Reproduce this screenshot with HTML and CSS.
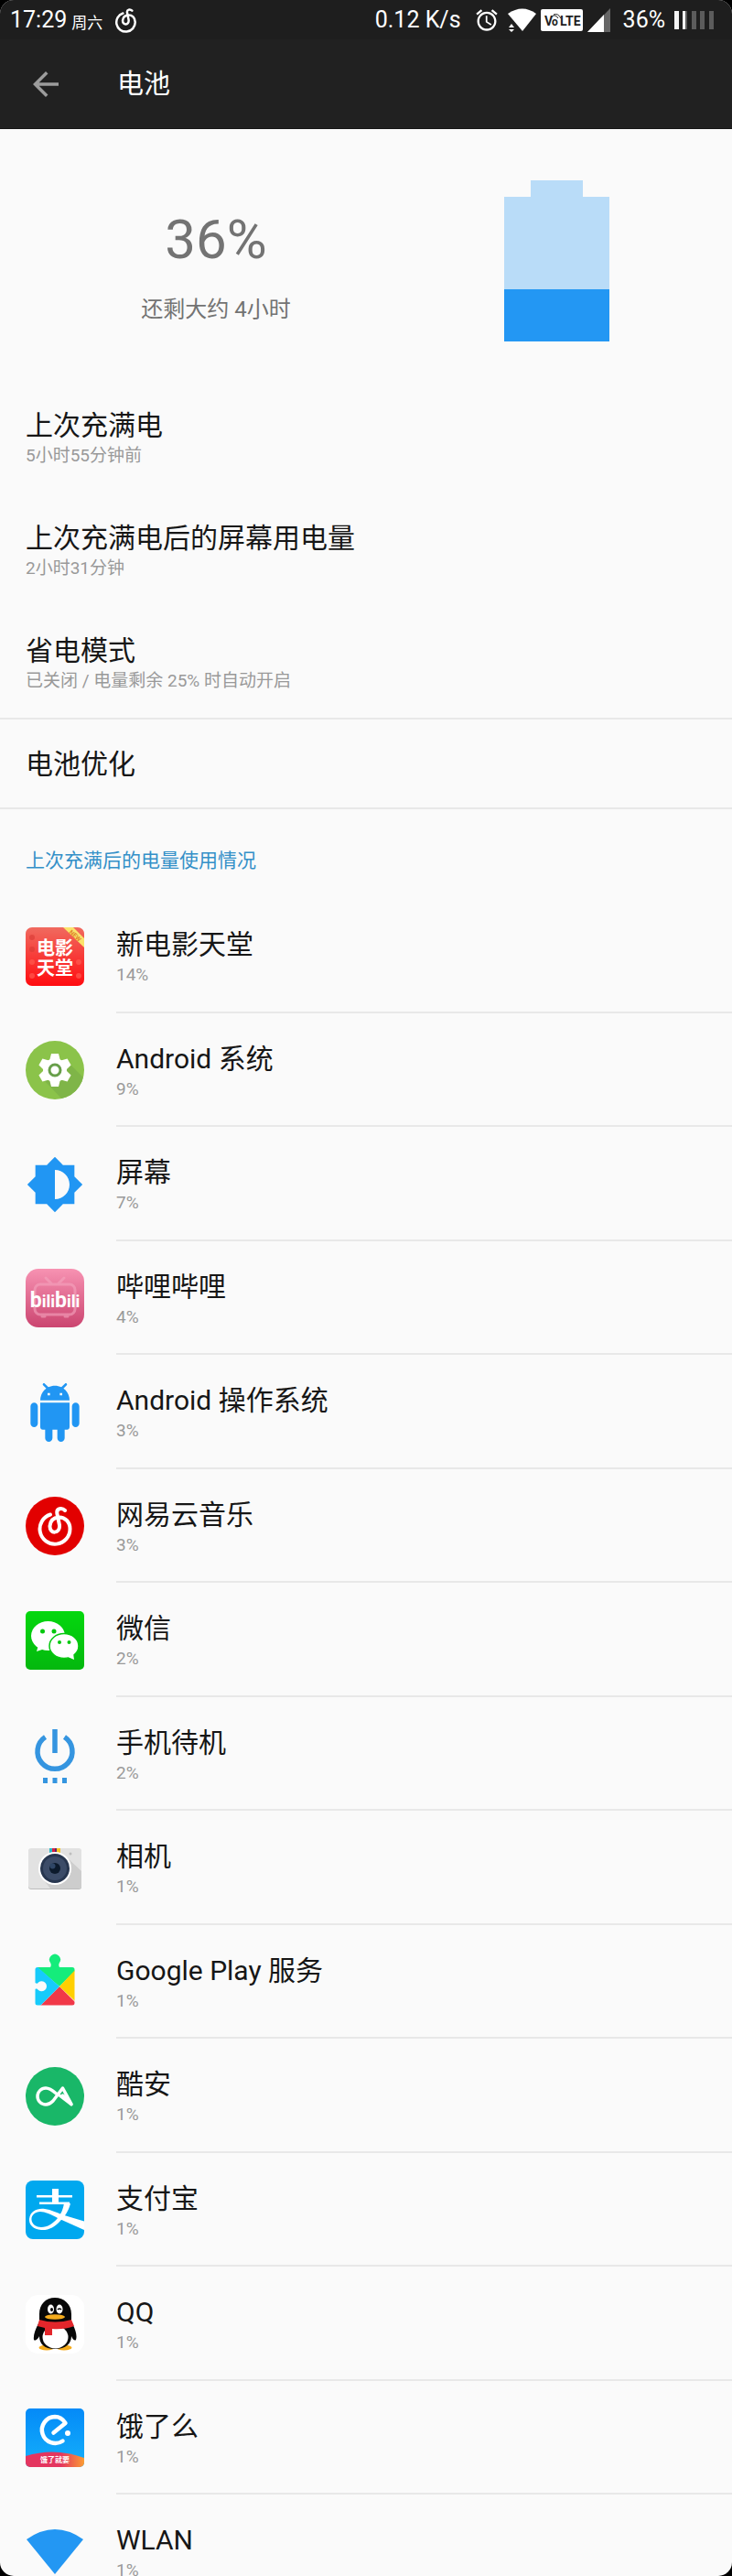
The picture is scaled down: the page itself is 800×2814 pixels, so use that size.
FILE: index.html
```html
<!DOCTYPE html>
<html lang="zh-CN">
<head>
  <meta charset="UTF-8" />
  <meta name="viewport" content="width=device-width, initial-scale=1.0"/>
  <title>电池</title>
  <link rel="stylesheet" href="styles.css">
</head>
<body>

  <!-- shared symbol, used in the status bar and in the app list -->
  <svg class="defs" width="0" height="0" aria-hidden="true">
    <symbol id="netease" viewBox="12 9 40 45">
      <path d="M43 15C40 12 33 12 34.500 19L37 31C38 41 26 41 26.500 32C27 26 31 23 36 22.500C43 22 48.500 27.500 48.500 35A16.500 16.500 0 1 1 27 19.500" fill="none" stroke="#fff" stroke-width="4" stroke-linecap="round" stroke-linejoin="round"/>
    </symbol>
  </svg>

  <div class="screen">
    <div class="statusbar">
      <div class="status-left">
        <span class="time">17:29</span>
        <span class="day">周六</span>
        <svg class="status-music" width="25" height="28"><use href="#netease"/></svg>
      </div>
      <div class="status-right">
        <span class="speed">0.12 K/s</span>
        <svg class="alarm" width="28" height="28" viewBox="0 0 24 24" fill="#fff"><path d="M22 5.720l-4.600-3.860-1.290 1.530 4.600 3.860L22 5.720zM7.880 3.390L6.600 1.860 2 5.710l1.290 1.530 4.590-3.850zM12.500 8H11v6l4.750 2.850.75-1.230-4-2.370V8zM12 4c-4.970 0-9 4.030-9 9s4.020 9 9 9c4.970 0 9-4.030 9-9s-4.030-9-9-9zm0 16c-3.870 0-7-3.130-7-7s3.130-7 7-7 7 3.130 7 7-3.130 7-7 7z"/></svg>
        <svg width="31" height="26" viewBox="0 0 31 26" fill="#fff"><path d="M16 25L0 6Q16-5 31 6Z"/><path d="M1 21h6L4 17zM1 23h6l-3 3z" stroke="#1f1f1f" stroke-width="1" paint-order="stroke"/></svg>
        <svg width="46" height="24" viewBox="0 0 46 24"><rect width="46" height="24" rx="2" fill="#fff"/><text x="4" y="18" class="volte">V</text><text x="12" y="18" class="volte volte-o">o</text><text x="21" y="18" class="volte">LTE</text><path d="M12 8q4-3 7 2M14 6q5-2 8 4" fill="none" stroke="#1f1f1f" stroke-width="1"/></svg>
        <svg class="signal" width="25" height="26" viewBox="0 0 25 26"><path d="M0 26L25 0V26Z" fill="#666"/><path d="M0 26L18 7V26Z" fill="#fff"/></svg>
        <span class="percent">36%</span>
        <svg width="43" height="20" viewBox="0 0 43 20"><path d="M0 0h5v20H0zM9 0h3v20H9z" fill="#f4f4f4"/><path d="M12 0h2v20h-2zM19 0h5v20h-5zM28 0h5v20h-5zM38 0h5v20h-5z" fill="#5c5c5c"/></svg>
      </div>
    </div>

    <header class="toolbar">
      <button class="back" aria-label="返回">
        <svg width="42" height="42" viewBox="0 0 24 24" fill="#9c9c9c"><path d="M20 11H7.830l5.590-5.590L12 4l-8 8 8 8 1.410-1.410L7.830 13H20v-2z"/></svg>
      </button>
      <h1>电池</h1>
    </header>

    <main class="content">
      <section class="hero">
        <div class="level">
          <div class="level-value">36%</div>
          <div class="level-left">还剩大约 4小时</div>
        </div>
        <div class="battery">
          <svg width="115" height="176" viewBox="0 0 115 176"><path d="M29 0h57v18h29v158H0V18h29z" fill="#b9dcf8"/><path d="M0 119h115v57H0z" fill="#2397f3"/></svg>
        </div>
      </section>

      <ul class="settings">
        <li class="setting"><div class="title">上次充满电</div><div class="sub">5小时55分钟前</div></li>
        <li class="setting"><div class="title">上次充满电后的屏幕用电量</div><div class="sub">2小时31分钟</div></li>
        <li class="setting"><a href="#saver"><div class="title">省电模式</div><div class="sub">已关闭 / 电量剩余 25% 时自动开启</div></a></li>
        <li class="setting single"><a href="#optimize"><div class="title">电池优化</div></a></li>
      </ul>

      <h2>上次充满后的电量使用情况</h2>

      <ul class="apps">
        <li><a class="app" href="#movie">
          <svg class="icon" viewBox="0 0 64 64">
            <defs>
              <linearGradient id="movieBg" x1="0" y1="0" x2="0" y2="1"><stop offset="0" stop-color="#f06a5f"/><stop offset="1" stop-color="#ff0c10"/></linearGradient>
              <clipPath id="movieClip"><rect width="64" height="64" rx="7"/></clipPath>
            </defs>
            <g clip-path="url(#movieClip)">
              <rect width="64" height="64" fill="url(#movieBg)"/>
              <g fill="#d93a35" opacity=".6"><circle cx="7" cy="11" r="3"/><circle cx="7" cy="24" r="3"/></g>
              <g fill="#ff5a50" opacity=".7"><circle cx="7" cy="38" r="3"/><circle cx="7" cy="53" r="3"/><circle cx="58" cy="38" r="3"/><circle cx="58" cy="53" r="3"/></g>
              <path d="M41 0H52L64 12V22Z" fill="#fbe36b"/>
              <text x="47" y="6" class="movie-new" transform="rotate(42 47 6)">NEW</text>
            </g>
            <text x="12" y="30" class="movie-text">电影</text>
            <text x="12" y="52" class="movie-text">天堂</text>
          </svg>
          <div class="info"><div class="title">新电影天堂</div><div class="sub">14%</div></div>
        </a></li>

        <li><a class="app" href="#android">
          <svg class="icon" viewBox="0 0 64 64">
            <clipPath id="gearClip"><circle cx="32" cy="32" r="32"/></clipPath>
            <circle cx="32" cy="32" r="32" fill="#8bc34a"/>
            <path d="M20 43L45 22L70 47L50 70H46Z" fill="#7fb548" clip-path="url(#gearClip)"/>
            <g fill="#fff">
              <circle cx="32" cy="32" r="13"/>
              <path id="tooth" d="M28 14h8l2 8v20l-2 8h-8l-2-8V22z"/>
              <use href="#tooth" transform="rotate(60 32 32)"/>
              <use href="#tooth" transform="rotate(120 32 32)"/>
            </g>
            <circle cx="32" cy="32" r="6" fill="#fff" stroke="#689f4b" stroke-width="3"/>
          </svg>
          <div class="info"><div class="title">Android 系统</div><div class="sub">9%</div></div>
        </a></li>

        <li><a class="app" href="#display">
          <svg class="icon" viewBox="0 0 24 24" fill="#2196f3"><path d="M20 15.310L23.310 12 20 8.690V4h-4.690L12 .69 8.690 4H4v4.690L.69 12 4 15.310V20h4.690L12 23.310 15.310 20H20v-4.690zM12 18V6c3.310 0 6 2.690 6 6s-2.690 6-6 6z"/></svg>
          <div class="info"><div class="title">屏幕</div><div class="sub">7%</div></div>
        </a></li>

        <li><a class="app" href="#bilibili">
          <svg class="icon" viewBox="0 0 64 64">
            <linearGradient id="biliBg" x1="0" y1="0" x2="0" y2="1"><stop offset="0" stop-color="#f792b2"/><stop offset="1" stop-color="#cb4570"/></linearGradient>
            <rect width="64" height="64" rx="14" fill="url(#biliBg)"/>
            <g fill="none" stroke="#f5a5bf" stroke-width="3" stroke-linecap="round" opacity=".6"><rect x="10" y="17" width="44" height="33" rx="6"/><path d="M22 10l6 6M42 10l-6 6M18 52h3M43 52h3"/></g>
            <text x="32" y="42" text-anchor="middle" class="bili-text"><tspan class="bili-b">b</tspan>ili<tspan class="bili-b">b</tspan>ili</text>
          </svg>
          <div class="info"><div class="title">哔哩哔哩</div><div class="sub">4%</div></div>
        </a></li>

        <li><a class="app" href="#os">
          <svg class="icon" viewBox="0 0 24 24" fill="#2196f3"><path d="M6 18c0 .55.45 1 1 1h1v3.500c0 .83.67 1.500 1.500 1.500s1.500-.67 1.500-1.500V19h2v3.500c0 .83.67 1.500 1.500 1.500s1.500-.67 1.500-1.500V19h1c.55 0 1-.45 1-1V8H6v10zM3.500 8C2.670 8 2 8.670 2 9.500v7c0 .83.67 1.500 1.500 1.500S5 17.330 5 16.500v-7C5 8.670 4.330 8 3.500 8zm17 0c-.83 0-1.500.67-1.500 1.500v7c0 .83.67 1.500 1.500 1.500s1.500-.67 1.500-1.500v-7c0-.83-.67-1.500-1.500-1.500zm-4.970-5.840l1.300-1.300c.2-.2.2-.51 0-.71-.2-.2-.51-.2-.71 0l-1.480 1.480C13.850 1.230 12.950 1 12 1c-.96 0-1.860.23-2.660.63L7.850.15c-.2-.2-.51-.2-.71 0-.2.2-.2.51 0 .71l1.310 1.310C6.970 3.260 6 5.010 6 7h12c0-1.990-.97-3.750-2.470-4.840zM10 5H9V4h1v1zm5 0h-1V4h1v1z"/></svg>
          <div class="info"><div class="title">Android 操作系统</div><div class="sub">3%</div></div>
        </a></li>

        <li><a class="app" href="#music">
          <svg class="icon" viewBox="0 0 64 64"><circle cx="32" cy="32" r="32" fill="#e20000"/><use href="#netease" x="12" y="9" width="40" height="45"/></svg>
          <div class="info"><div class="title">网易云音乐</div><div class="sub">3%</div></div>
        </a></li>

        <li><a class="app" href="#wechat">
          <svg class="icon" viewBox="0 0 64 64">
            <linearGradient id="wxBg" x1="0" y1="0" x2="0" y2="1"><stop offset="0" stop-color="#04d80e"/><stop offset="1" stop-color="#04b80e"/></linearGradient>
            <rect width="64" height="64" rx="5" fill="url(#wxBg)"/>
            <g fill="#fff"><ellipse cx="24.500" cy="27" rx="18.500" ry="16"/><path d="M14 37l-2 7 9-3z"/></g>
            <ellipse cx="42" cy="38" rx="16" ry="13.500" fill="#fff" stroke="#04c80e" stroke-width="1.500"/>
            <path d="M46 50l7 3-1-7z" fill="#fff"/>
            <g fill="#04c80e"><circle cx="18.500" cy="22" r="2.500"/><circle cx="31" cy="22" r="2.500"/><circle cx="37" cy="34" r="2"/><circle cx="47.500" cy="34" r="2"/></g>
          </svg>
          <div class="info"><div class="title">微信</div><div class="sub">2%</div></div>
        </a></li>

        <li><a class="app" href="#standby">
          <svg class="icon" viewBox="0 0 64 64"><path d="M21.500 13.500A19 19 0 1 0 42.500 13.500M32 5V31" fill="none" stroke="#3595e0" stroke-width="5.500"/><path d="M19 58h5v6h-5zM29.500 58h5v6h-5zM40 58h5v6h-5z" fill="#3595e0"/></svg>
          <div class="info"><div class="title">手机待机</div><div class="sub">2%</div></div>
        </a></li>

        <li><a class="app" href="#camera">
          <svg class="icon" viewBox="0 0 64 64">
            <rect x="3" y="11" width="58" height="44" rx="3" fill="#bdbdbd"/>
            <rect x="3" y="10" width="58" height="44" rx="3" fill="#e2e2e2"/>
            <path d="M45 20L61 35V54H27L20 45Z" fill="#cdcdcd"/>
            <path d="M26 10h3v5h-3z" fill="#26b8c6"/><path d="M29 10h3v5h-3z" fill="#d81f45"/><path d="M32 10h2v5h-2z" fill="#5f2a66"/><path d="M34 10h4v5h-4z" fill="#f6c423"/>
            <circle cx="49" cy="16" r="1.500" fill="#bdbdbd"/>
            <circle cx="32" cy="32" r="18" fill="#fff"/>
            <circle cx="32" cy="32" r="16" fill="#27364f"/>
            <circle cx="32" cy="32" r="13" fill="#3c4c68"/>
            <circle cx="32" cy="32" r="6" fill="#0c1a2c"/>
            <circle cx="29.500" cy="29.500" r="3" fill="#2f4666"/>
          </svg>
          <div class="info"><div class="title">相机</div><div class="sub">1%</div></div>
        </a></li>

        <li><a class="app" href="#play">
          <svg class="icon" viewBox="0 0 64 64">
            <clipPath id="puzzle"><path d="M13 16H27C28 14 28 13 27 11A6 6 0 1 1 37 11C36 13 36 14 37 16H51Q53.500 16 53.500 18.500V55Q53.500 57.500 51 57.500H13Q10.500 57.500 10.500 55V40C12 39 13 40 14 41A5.500 5.500 0 1 0 14 32.500C13 34 12 34 10.500 33V18.500Q10.500 16 13 16Z"/></clipPath>
            <g clip-path="url(#puzzle)">
              <path d="M10 14V0H54V20L37 37Z" fill="#15ec7b"/>
              <path d="M10 64L37 37L58 58V64Z" fill="#f13848"/>
              <path d="M55 18L37 37L55 54Z" fill="#ffcf00"/>
              <path d="M10 13L37 37L10 64Z" fill="#16cbfb"/>
            </g>
          </svg>
          <div class="info"><div class="title">Google Play 服务</div><div class="sub">1%</div></div>
        </a></li>

        <li><a class="app" href="#coolapk">
          <svg class="icon" viewBox="0 0 64 64"><circle cx="32" cy="32" r="32" fill="#19b768"/><path d="M40.500 31L50 40.500L40.500 23L30 37C27 40 24.500 41 22 41A9 9 0 0 1 22 23C27 23 30 26 34 29.500" fill="none" stroke="#fff" stroke-width="3.500" stroke-linecap="round" stroke-linejoin="round"/><path d="M37 31L50 41" stroke="#fff" stroke-width="3" stroke-linecap="round"/></svg>
          <div class="info"><div class="title">酷安</div><div class="sub">1%</div></div>
        </a></li>

        <li><a class="app" href="#alipay">
          <svg class="icon" viewBox="0 0 64 64">
            <clipPath id="aliClip"><rect width="64" height="64" rx="8"/></clipPath>
            <rect width="64" height="64" rx="8" fill="#00a8ef"/>
            <g clip-path="url(#aliClip)">
              <path d="M29 9h7v16h-7zM12 16h39v2.500H12zM15 23.500h33V26H15z" fill="#fff"/>
              <path d="M42 25h7C47 33 43 39 38 44C32 51 25 54.500 17 54C8 53 3.500 48 4 42C5 33 13 30 21 31C28 32 34 35 39 37L66 45V55L35 41C28 37 21 34 16 34C10 34.500 6 38 6.500 43C7 48 12 51 17 51C24 51 30 47 35 41C39 36 41 31 42 25Z" fill="#fff"/>
            </g>
          </svg>
          <div class="info"><div class="title">支付宝</div><div class="sub">1%</div></div>
        </a></li>

        <li><a class="app" href="#qq">
          <svg class="icon" viewBox="0 0 64 64">
            <rect width="64" height="64" rx="14" fill="#fff"/>
            <g fill="#f5ac1d"><ellipse cx="23" cy="57.500" rx="8.500" ry="3"/><ellipse cx="42" cy="57.500" rx="8.500" ry="3"/></g>
            <path d="M32 3C42 3 50 10 50 21V29C53 35 57 43 55 49C53 51 51 47 50 45C50 53 44 59 32 59S15 53 15 45C14 47 11 51 9 49C8 43 12 35 15 29V21C15 10 22 3 32 3Z" fill="#080808"/>
            <ellipse cx="32.500" cy="46" rx="14" ry="12.500" fill="#fff"/>
            <g fill="#fff"><ellipse cx="27.500" cy="15.500" rx="3.500" ry="5"/><ellipse cx="37" cy="15.500" rx="3.500" ry="5"/></g>
            <ellipse cx="28.500" cy="16" rx="1.500" ry="2" fill="#080808"/><path d="M35 16q2-2 4 0" fill="none" stroke="#080808" stroke-width="1.500"/>
            <ellipse cx="32" cy="24" rx="11" ry="2.800" fill="#f5ac1d"/>
            <path d="M15 27Q32 32 50 27L53 34Q42 38 29 37V44H21V36L13 34Z" fill="#e3262b"/>
          </svg>
          <div class="info"><div class="title">QQ</div><div class="sub">1%</div></div>
        </a></li>

        <li><a class="app" href="#eleme">
          <svg class="icon" viewBox="0 0 64 64">
            <linearGradient id="eleBg" x1="0" y1="0" x2="0" y2="1"><stop offset="0" stop-color="#048af8"/><stop offset="1" stop-color="#14b0fa"/></linearGradient>
            <linearGradient id="eleWave" x1="0" y1="0" x2="1" y2="0"><stop offset=".6" stop-color="#e4355f"/><stop offset="1" stop-color="#fb9c33"/></linearGradient>
            <clipPath id="eleClip"><rect width="64" height="64" rx="5"/></clipPath>
            <g clip-path="url(#eleClip)">
              <rect width="64" height="64" fill="url(#eleBg)"/>
              <path d="M0 52Q32 42 64 54V64H0Z" fill="url(#eleWave)"/>
            </g>
            <path d="M30.500 26.500L43.500 16C40 10.500 36 9 32 9A14.500 14.500 0 1 0 40.500 35.500" fill="none" stroke="#fff" stroke-width="4.500" stroke-linecap="round" stroke-linejoin="round"/>
            <circle cx="46" cy="27" r="3" fill="#fff"/>
            <text x="32" y="59" text-anchor="middle" class="ele-text">饿了就要</text>
          </svg>
          <div class="info"><div class="title">饿了么</div><div class="sub">1%</div></div>
        </a></li>

        <li><a class="app" href="#wlan">
          <svg class="icon" viewBox="0 0 64 64"><path d="M1 18Q32-4 63 18L32 56Z" fill="#2397f3"/></svg>
          <div class="info"><div class="title">WLAN</div><div class="sub">1%</div></div>
        </a></li>
      </ul>
    </main>
  </div>

</body>
</html>
```
FILE: styles.css
```css
* {
  box-sizing: border-box;
}
body {
  margin: 0;
  background: #000;
  color: #161616;
  font-family: Roboto, "Noto Sans CJK SC", sans-serif;
}
h1, h2, ul {
  margin: 0;
  padding: 0;
  font-weight: 400;
}
ul {
  list-style: none;
}
a {
  color: inherit;
  text-decoration: none;
}
svg {
  display: block;
  flex: none;
}
.defs {
  position: absolute;
}
.screen {
  display: flex;
  flex-direction: column;
  height: 100vh;
  border-radius: 15px;
  overflow: hidden;
  background: #fafafa;
}

/* status bar */
.statusbar {
  display: flex;
  justify-content: space-between;
  flex: none;
  height: 43px;
  padding: 0 20px 0 11px;
  background: #1e1e1e;
  color: #fff;
  font-size: 25px;
  line-height: 43px;
}
.status-left, .status-right {
  display: flex;
  align-items: center;
  gap: 5px;
}
.day {
  font-size: 17px;
  line-height: 36px;
  padding-top: 6px;
}
.status-music {
  margin-left: 8px;
}
.speed, .signal {
  margin-right: 9px;
}
.alarm {
  margin-right: 4px;
}
.percent {
  margin-right: 5px;
}
.volte {
  font: 700 14px Roboto, sans-serif;
  fill: #1f1f1f;
}
.volte-o {
  font-size: 12px;
}

/* toolbar */
.toolbar {
  display: flex;
  align-items: center;
  flex: none;
  gap: 57px;
  height: 98px;
  padding: 0 29px;
  border-bottom: 1px solid #151515;
  background: #212121;
  color: #fff;
}
.back {
  padding: 0;
  border: none;
  background: none;
  cursor: pointer;
}
.toolbar h1 {
  font-size: 29px;
  line-height: 38px;
}

.content {
  flex: 1;
  overflow-y: auto;
  scrollbar-width: none;
}

/* battery level */
.hero {
  display: grid;
  grid-template-columns: 1fr 1fr;
  padding: 56px 6px 42px 50px;
}
.level {
  padding-top: 29px;
  color: #737373;
  text-align: center;
}
.level-value {
  font-size: 60px;
  line-height: 72px;
}
.level-left {
  margin-top: 22px;
  font-size: 24px;
  line-height: 36px;
}
.battery {
  display: flex;
  justify-content: center;
}

/* rows */
.title {
  font-size: 30px;
  line-height: 38px;
}
.sub {
  font-size: 19px;
  line-height: 28px;
  color: #999;
}
.setting {
  padding: 31px 28px 26px;
}
.setting:nth-child(3), .setting.single {
  border-bottom: 2px solid #e8e8e8;
}
.setting.single {
  padding: 30px 28px 28px;
}
h2 {
  padding: 40px 28px 26px;
  font-size: 21px;
  line-height: 32px;
  color: #3490c8;
}
.app {
  display: flex;
  align-items: center;
  gap: 35px;
  padding-left: 28px;
}
.icon {
  width: 64px;
  height: 64px;
}
.info {
  flex: 1;
  padding: 31px 0 26px;
  border-bottom: 2px solid #e8e8e8;
}
.apps li:nth-child(even) .info {
  padding-bottom: 25px;
}

/* text inside app icons */
.movie-text {
  font: 700 20px "Noto Sans CJK SC", sans-serif;
  fill: #fff;
}
.movie-new {
  font: 700 7px Roboto, sans-serif;
  fill: #e0872a;
}
.bili-text {
  font: 700 18px Roboto, sans-serif;
  fill: #fff;
}
.bili-b {
  font-size: 23px;
}
.ele-text {
  font: 700 8px "Noto Sans CJK SC", sans-serif;
  fill: #fff;
}
```
